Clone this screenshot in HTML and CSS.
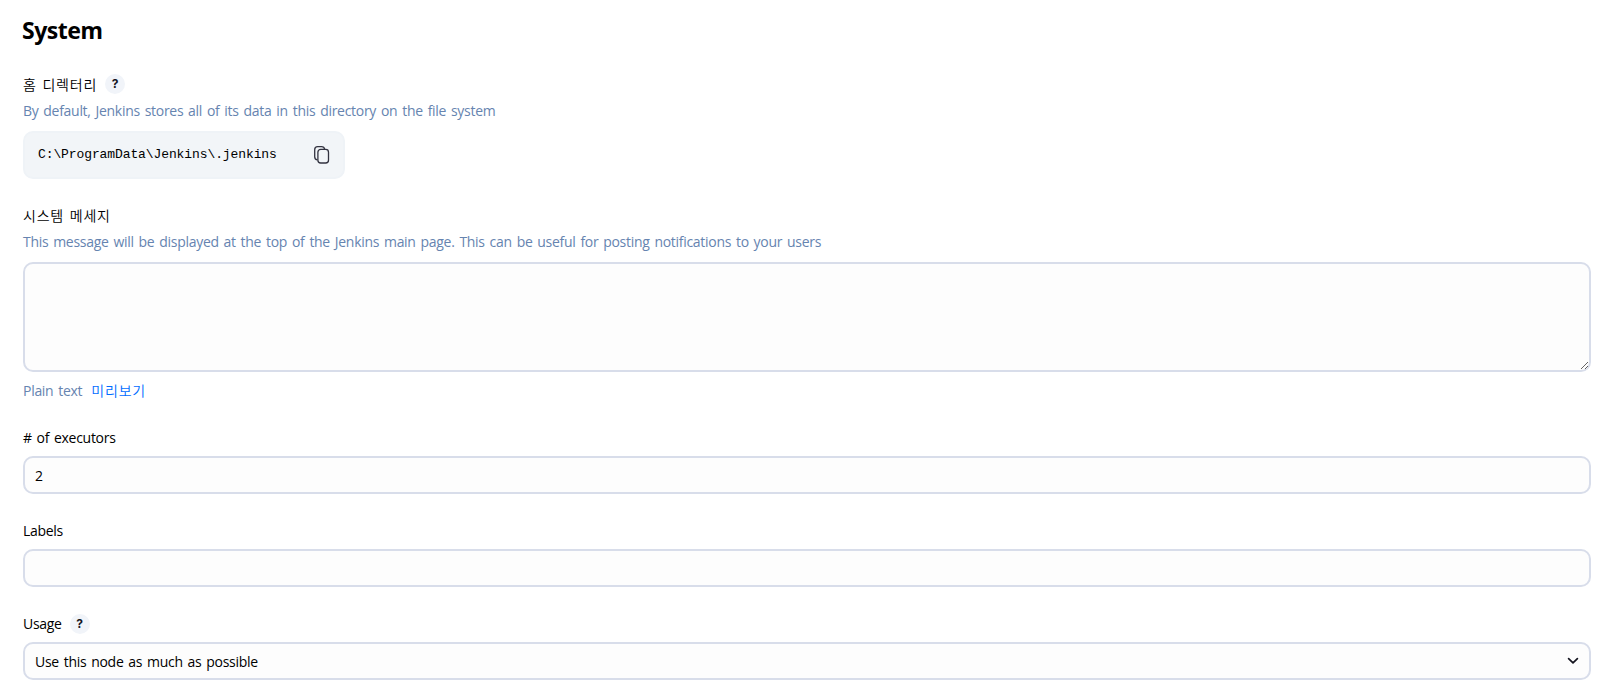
FILE: index.html
```
<!DOCTYPE html>
<html lang="ko">
<head>
    <meta charset="UTF-8">
    <meta name="viewport" content="width=device-width, initial-scale=1.0">
    <title>System</title>
    <link rel="stylesheet" href="styles.css">
</head>
<body>
    <h1>System</h1>
    <form id="configForm">
        <div class="form-group">
            <div class="form-label ko">홈 디렉터리 <button type="button" class="help-button">?</button></div>
            <div class="form-description">By default, Jenkins stores all of its data in this directory on the file system</div>
            <div class="quote">
                <code>C:\ProgramData\Jenkins\.jenkins</code>
                <svg class="copy-icon" viewBox="0 0 18 20" fill="none" stroke="#333340" stroke-width="1.3">
                    <path d="M4.5 14.9C2.4 14.7 1.7 13.6 1.7 11.8V4.7C1.7 2.7 2.7 1.7 4.7 1.7H8.6C10.3 1.7 11.3 2.4 11.6 4.2"/>
                    <rect x="4.9" y="4.4" width="10.6" height="13.6" rx="2.8"/>
                </svg>
            </div>
        </div>

        <div class="form-group">
            <label class="form-label ko" for="message">시스템 메세지</label>
            <div class="form-description">This message will be displayed at the top of the Jenkins main page. This can be useful for posting notifications to your users</div>
            <textarea id="message" name="message"></textarea>
            <div class="preview-row">
                <span>Plain text</span>
                <a class="ko" href="#">미리보기</a>
            </div>
        </div>

        <div class="form-group">
            <label class="form-label" for="executors"># of executors</label>
            <input type="text" id="executors" name="executors" value="2">
        </div>

        <div class="form-group">
            <label class="form-label" for="labels">Labels</label>
            <input type="text" id="labels" name="labels">
        </div>

        <div class="form-group">
            <div class="form-label">Usage <button type="button" class="help-button">?</button></div>
            <div class="select">
                <select id="usage" name="usage">
                    <option>Use this node as much as possible</option>
                </select>
                <svg class="chevron" viewBox="0 0 12 8" fill="none" stroke="#14141f" stroke-width="1.7" stroke-linecap="round" stroke-linejoin="round">
                    <path d="M1.6 1.6L6 5.8L10.4 1.6"/>
                </svg>
            </div>
        </div>
    </form>
</body>
</html>
```
FILE: styles.css
```
* {
    box-sizing: border-box;
}
body {
    margin: 0;
    padding: 15px 17px 0 23px;
    background: #fff;
    color: #000;
    font-family: "Open Sans", "Noto Sans CJK KR", sans-serif;
    font-size: 14px;
    line-height: 20px;
    letter-spacing: -0.29px;
    word-spacing: 1.5px;
    overflow: hidden;
}
h1 {
    margin: 0 0 29px;
    font-family: "Noto Sans", sans-serif;
    font-size: 23px;
    line-height: 30px;
    font-weight: 700;
    letter-spacing: -0.5px;
    text-indent: -1px;
}
.form-group {
    margin-bottom: 27px;
}
.form-label {
    display: flex;
    align-items: center;
    height: 20px;
    margin-bottom: 8px;
}
.ko {
    font-family: "Noto Sans CJK KR", sans-serif;
    font-size: 14px;
    font-weight: 350;
    line-height: 18px;
    letter-spacing: 0.8px;
    word-spacing: 1px;
}
.help-button {
    width: 20px;
    height: 20px;
    margin-left: 8px;
    padding: 0;
    border: none;
    border-radius: 50%;
    background: #f1f4f9;
    color: #14141f;
    font: 700 12px/20px Inter, sans-serif;
}
.form-description {
    margin: -1px 0 10px;
    color: #6684b0;
    white-space: nowrap;
}
.quote {
    display: flex;
    align-items: center;
    justify-content: space-between;
    width: 322px;
    height: 48px;
    margin-bottom: -1px;
    padding: 0 12px 0 13px;
    border: 2px solid #eff3f7;
    border-radius: 10px;
    background: #f2f5f8;
}
code {
    font-family: "Liberation Mono", monospace;
    font-size: 13px;
    letter-spacing: -0.1px;
}
.copy-icon {
    width: 18px;
    height: 20px;
}
input, textarea, select {
    display: block;
    width: 100%;
    height: 38px;
    padding: 1px 10px 0;
    border: 2px solid #d8ddea;
    border-radius: 10px;
    background: #fdfdfd;
    color: #000;
    font: inherit;
    letter-spacing: inherit;
    word-spacing: inherit;
    outline: none;
}
textarea {
    height: 110px;
    resize: vertical;
}
.preview-row {
    display: flex;
    gap: 9px;
    height: 20px;
    margin-top: 9px;
    color: #6684b0;
}
.preview-row a {
    color: #006cff;
    text-decoration: none;
}
.select {
    position: relative;
}
select {
    appearance: none;
}
.chevron {
    position: absolute;
    right: 12px;
    top: 15px;
    width: 12px;
    height: 8px;
}
```
